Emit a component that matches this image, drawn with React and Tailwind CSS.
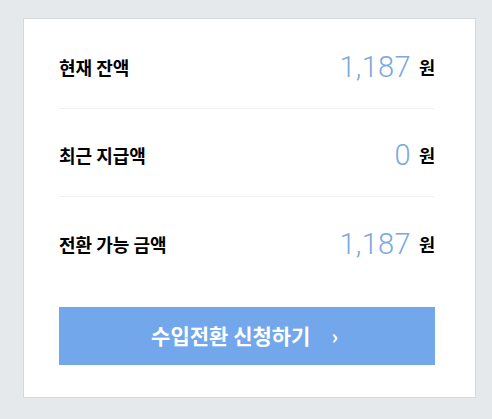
export default function App() {
  const rows = [
    { label: "현재 잔액", value: "1,187" },
    { label: "최근 지급액", value: "0" },
    { label: "전환 가능 금액", value: "1,187" },
  ];
  return (
    <div className="w-[492px] h-[419px] bg-[#e6e9ec] pt-[18px] pl-[23px] font-['Noto_Sans_CJK_KR',sans-serif]">
      <div className="w-[453px] h-[380px] bg-white border border-[#d6d9dc] pt-[2px] pl-[35px] pr-[40px] box-border">
        {rows.map((r, i) => (
          <div
            key={i}
            className={`h-[88px] box-border pt-[6px] flex items-center justify-between ${i < 2 ? "border-b border-[#f0f1f2]" : ""}`}
          >
            <span className="text-[18px] font-bold text-black tracking-[0px]">{r.label}</span>
            <span className="flex items-center">
              <span className="font-['Roboto',sans-serif] font-light text-[29px] tracking-[0.3px] text-[#7aa8df] leading-none">{r.value}</span>
              <span className="ml-[8px] text-[17.5px] font-bold text-black">원</span>
            </span>
          </div>
        ))}
        <button className="mt-[22px] w-full h-[58px] bg-[#73a7eb] flex items-center justify-center text-white font-bold text-[21px] pr-[5px]">
          <span>수입전환 신청하기</span>
          <span className="ml-[21px] text-[20px] font-bold">›</span>
        </button>
      </div>
    </div>
  );
}
